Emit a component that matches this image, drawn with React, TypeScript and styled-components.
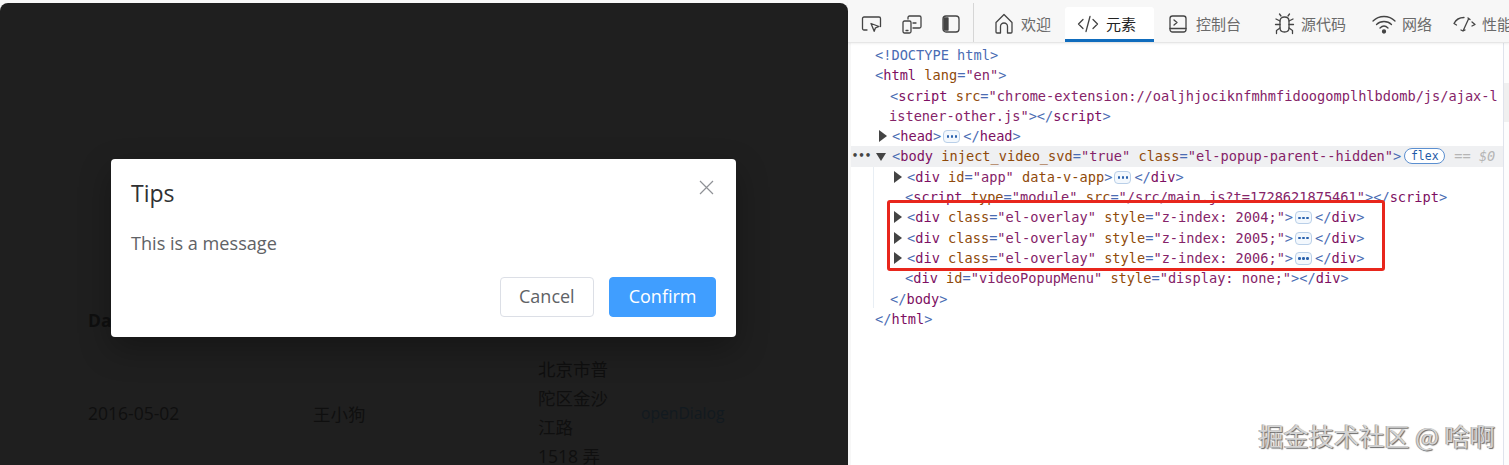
import React from 'react';
import styled, { createGlobalStyle } from 'styled-components';

const UI_FONT = `'Open Sans', 'Noto Sans CJK SC', sans-serif`;
const CODE_FONT = `'DejaVu Sans Mono', 'Liberation Mono', monospace`;

const GlobalStyle = createGlobalStyle`
  html, body {
    margin: 0;
    padding: 0;
    background: #f7f7f7;
    overflow: hidden;
  }
  * {
    box-sizing: border-box;
  }
`;

const Screen = styled.div`
  display: flex;
  width: 1509px;
  height: 465px;
  overflow: hidden;
  position: relative;
`;

/* left: the page under the dimmed overlay */
const PagePane = styled.section`
  position: relative;
  width: 848px;
  height: 462px;
  margin-top: 3px;
  padding: 292px 0 0 88px;
  background: #1f1f1f;
  border-radius: 8px 8px 0 0;
  overflow: hidden;
  font-family: ${UI_FONT};
  font-size: 17.5px;
  color: #0f0f0f;
`;

const TableRow = styled.div<{ $head?: boolean }>`
  display: grid;
  grid-template-columns: 225px 225px 103px 100px;
  align-items: center;
  height: ${(p) => (p.$head ? '50px' : 'auto')};
  padding-top: ${(p) => (p.$head ? '0' : '10px')};
  font-weight: ${(p) => (p.$head ? 700 : 400)};
`;

const Address = styled.div`
  width: 75px;
  line-height: 29px;
`;

const TableLink = styled.span`
  color: #121a20;
  font-size: 15.7px;
`;

const Dialog = styled.div`
  position: absolute;
  left: 111px;
  top: 156px;
  width: 625px;
  height: 178px;
  padding: 20px;
  background: #fff;
  border-radius: 4px;
  box-shadow: 0 12px 32px rgba(0, 0, 0, 0.3);
  display: flex;
  flex-direction: column;
`;

const DialogHead = styled.div`
  display: flex;
  justify-content: space-between;
  align-items: flex-start;
`;

const DialogTitle = styled.div`
  font-size: 23px;
  line-height: 30px;
  margin-top: -1px;
  color: #303133;
`;

const CloseIcon = styled.svg`
  width: 15px;
  height: 15px;
  margin: 1px 2px 0 0;
  stroke: #8f9196;
  stroke-width: 1.2;
  fill: none;
`;

const DialogBody = styled.div`
  margin-top: 21px;
  font-size: 18.1px;
  line-height: 28px;
  color: #606266;
`;

const DialogFoot = styled.div`
  display: flex;
  justify-content: flex-end;
  gap: 15px;
  margin-top: auto;
`;

const Button = styled.div<{ $primary?: boolean }>`
  height: 40px;
  padding: 0 18.5px 3px;
  display: flex;
  align-items: center;
  font-size: 18px;
  border-radius: 4px;
  border: 1px solid ${(p) => (p.$primary ? '#409eff' : '#dcdfe6')};
  background: ${(p) => (p.$primary ? '#409eff' : '#fff')};
  color: ${(p) => (p.$primary ? '#fff' : '#606266')};
`;

/* right: devtools */
const DevPane = styled.section`
  position: relative;
  flex: 1;
  min-width: 0;
  display: flex;
  flex-direction: column;
  background: #f7f7f7;
`;

const TabBar = styled.div`
  display: flex;
  align-items: stretch;
  height: 43px;
  padding-left: 13px;
  border-bottom: 1px solid #e6e6e6;
  box-shadow: 0 1px 2px rgba(0, 0, 0, 0.06);
  white-space: nowrap;
  overflow: hidden;
  z-index: 1;
`;

const ToolButtons = styled.div`
  display: flex;
  align-items: center;
  gap: 20px;
  padding: 2px 13px 0 0;
  height: 39px;
  margin-top: 3px;
  border-right: 1px solid #d6d6d6;
`;

const Tab = styled.div<{ $active?: boolean; $gap?: number; $pad: number; $width?: number }>`
  display: flex;
  align-items: center;
  gap: ${(p) => p.$gap ?? 7}px;
  height: 35px;
  margin-top: 7px;
  flex: 0 0 ${(p) => (p.$width ? `${p.$width}px` : 'auto')};
  padding-left: ${(p) => p.$pad}px;
  padding-top: 1px;
  font-family: 'Noto Sans CJK SC', sans-serif;
  font-size: 15px;
  color: ${(p) => (p.$active ? '#222' : '#6a6a6a')};
  background: ${(p) => (p.$active ? '#fff' : 'transparent')};
  border-bottom: 3px solid ${(p) => (p.$active ? '#0f6cbd' : 'transparent')};
  border-radius: 3px 3px 0 0;
`;

const Glyph = styled.svg<{ $w: number }>`
  width: ${(p) => p.$w}px;
  height: 22px;
  flex: none;
  fill: none;
  stroke: #444;
  stroke-width: 1.3;
  stroke-linecap: round;
  stroke-linejoin: round;
`;

const CodeArea = styled.div`
  flex: 1;
  display: flex;
  margin-left: 3px;
  background: #fff;
  overflow: hidden;
`;

const CodeLines = styled.div`
  position: relative;
  flex: 1;
  min-width: 0;
  padding-top: 2px;
  font-family: ${CODE_FONT};
  font-size: 13.65px;
`;

const ScrollTrack = styled.div`
  flex: 0 0 6px;
  padding-top: 40px;
  background: #fdfdfd;
  border-left: 1px solid #dfe3ec;
`;

const ScrollThumb = styled.div`
  height: 39px;
  background: #f0f0f0;
`;

const IndentGuide = styled.div`
  position: absolute;
  left: 22px;
  top: 124px;
  height: 141px;
  border-left: 1px solid #e8eef4;
`;

const Line = styled.div<{ $indent: number; $selected?: boolean }>`
  position: relative;
  height: 20.3px;
  line-height: 20.3px;
  padding-left: ${(p) => p.$indent}px;
  white-space: pre;
  background: ${(p) => (p.$selected ? '#eff0f2' : 'transparent')};
`;

const Bracket = styled.span`
  color: #4a6cb3;
`;
const TagName = styled.span`
  color: #7d0f62;
`;
const AttrName = styled.span`
  color: #8f4a0a;
`;
const AttrValue = styled.span`
  color: #852368;
`;

const Arrow = styled.span<{ $open?: boolean }>`
  position: absolute;
  width: 0;
  height: 0;
  ${(p) =>
    p.$open
      ? `margin-left: -16px;
         top: 7px;
         border-left: 5px solid transparent;
         border-right: 5px solid transparent;
         border-top: 8px solid #444;`
      : `margin-left: -13px;
         top: 4px;
         border-top: 6px solid transparent;
         border-bottom: 6px solid transparent;
         border-left: 8px solid #444;`}
`;

const RowDots = styled.span`
  position: absolute;
  left: 1px;
  font-weight: 700;
  font-size: 10px;
  letter-spacing: 0.5px;
  color: #444;
`;

const Fold = styled.span`
  display: inline-flex;
  align-items: center;
  justify-content: center;
  vertical-align: top;
  gap: 1.5px;
  width: 17px;
  height: 13px;
  margin: 4px 3px 0 2px;
  border: 1px solid #b9cfe8;
  border-radius: 4px;
  background: #f3f8fd;
  & > i {
    width: 2.5px;
    height: 2.5px;
    border-radius: 50%;
    background: #2a62ad;
  }
`;

const FlexPill = styled.span`
  display: inline-flex;
  align-items: center;
  justify-content: center;
  vertical-align: top;
  width: 41px;
  height: 16px;
  margin: 2px 0 0 3px;
  border: 1px solid #5b8fd0;
  border-radius: 8px;
  font-size: 11.5px;
  line-height: 14px;
  color: #1f5ba8;
  background: #fff;
`;

const Reference = styled.span`
  margin-left: 9px;
  color: #b5b5b5;
  font-style: italic;
`;

const RedBox = styled.div`
  position: absolute;
  left: 36px;
  top: 157px;
  width: 498px;
  height: 71px;
  border: 3px solid #e8261c;
  border-radius: 3px;
`;

const Watermark = styled.div`
  position: absolute;
  right: 14px;
  bottom: 14px;
  font-family: 'Noto Sans CJK SC', sans-serif;
  font-size: 25.2px;
  line-height: 32px;
  white-space: nowrap;
  color: #d4d4d4;
  text-shadow: 1px 1px 1px #666, -1px 0 0 #aaa;
`;

const Open = ({ name, children }: { name: string; children?: React.ReactNode }) => (
  <>
    <Bracket>&lt;</Bracket>
    <TagName>{name}</TagName>
    {children}
  </>
);

const Close = ({ name }: { name: string }) => (
  <>
    <Bracket>&lt;/</Bracket>
    <TagName>{name}</TagName>
    <Bracket>&gt;</Bracket>
  </>
);

const Attr = ({ name, value, wraps }: { name: string; value?: string; wraps?: boolean }) => (
  <>
    {' '}
    <AttrName>{name}</AttrName>
    {value !== undefined && (
      <>
        <Bracket>=</Bracket>
        <AttrValue>
          "{value}
          {!wraps && '"'}
        </AttrValue>
      </>
    )}
  </>
);

const Dots = () => (
  <Fold>
    <i />
    <i />
    <i />
  </Fold>
);

const overlays = ['2004', '2005', '2006'];

const App: React.FC = () => {
  return (
    <Screen>
      <GlobalStyle />
      <PagePane>
        <TableRow $head>
          <span>Date</span>
        </TableRow>
        <TableRow>
          <span>2016-05-02</span>
          <span>王小狗</span>
          <Address>北京市普陀区金沙江路 1518 弄</Address>
          <TableLink>openDialog</TableLink>
        </TableRow>
        <Dialog>
          <DialogHead>
            <DialogTitle>Tips</DialogTitle>
            <CloseIcon viewBox="0 0 15 15">
              <path d="M1 1l13 13M14 1L1 14" />
            </CloseIcon>
          </DialogHead>
          <DialogBody>This is a message</DialogBody>
          <DialogFoot>
            <Button>Cancel</Button>
            <Button $primary>Confirm</Button>
          </DialogFoot>
        </Dialog>
      </PagePane>

      <DevPane>
        <TabBar>
          <ToolButtons>
            <Glyph $w={21} viewBox="0 0 21 22">
              <path d="M6 17H3a1.500 1.500 0 0 1-1.500-1.500V5.500A1.500 1.500 0 0 1 3 4h15a1.500 1.500 0 0 1 1.500 1.500v8" />
              <path d="M10 10.500l8 3-3.500 1.300-1.300 3.500z" />
            </Glyph>
            <Glyph $w={20} viewBox="0 0 20 22">
              <path d="M6 6V4.500A1.500 1.500 0 0 1 7.500 3h10A1.500 1.500 0 0 1 19 4.500v9a1.500 1.500 0 0 1-1.500 1.500H11" />
              <rect x="1" y="8" width="8" height="12" rx="1.500" />
              <path d="M11 10h3M4 17.500h2" />
            </Glyph>
            <Glyph $w={18} viewBox="0 0 18 22">
              <rect x="1" y="3" width="16" height="16" rx="3" />
              <path d="M2 5h4v12H2z" fill="#444" />
            </Glyph>
          </ToolButtons>
          <Tab $pad={20} $width={91}>
            <Glyph $w={20} viewBox="0 0 20 22">
              <path d="M2 19V9.500L10 1.500l8 8V19a1 1 0 0 1-1 1h-3.500v-6.500a3.500 3.500 0 0 0-7 0V20H3a1 1 0 0 1-1-1z" />
            </Glyph>
            欢迎
          </Tab>
          <Tab $active $pad={12} $width={89}>
            <Glyph $w={22} viewBox="0 0 22 22">
              <path d="M6 6.500L1.500 11 6 15.500M16 6.500l4.500 4.500-4.500 4.500M13 3.500L9 18.500" />
            </Glyph>
            元素
          </Tab>
          <Tab $pad={15} $gap={9} $width={120}>
            <Glyph $w={18} viewBox="0 0 18 22">
              <rect x="1" y="3" width="16" height="16" rx="2.500" />
              <path d="M1 15.500h16M5 7l3 2.500L5 12" />
            </Glyph>
            控制台
          </Tab>
          <Tab $pad={0} $gap={6} $width={98}>
            <Glyph $w={21} viewBox="0 0 21 22">
              <path d="M6 8c0-2.500 2-4 4.500-4S15 5.500 15 8v7c0 2.500-2 4-4.500 4S6 17.500 6 15z" />
              <path d="M7 3L5.500 1M14 3l1.500-2M6 8L2 6M15 8l4-2M6 11.500H1.500M15 11.500h4.500M6 15l-3.500 2.500v3M15 15l3.500 2.500v3" />
            </Glyph>
            源代码
          </Tab>
          <Tab $pad={0} $gap={6} $width={80}>
            <Glyph $w={24} viewBox="0 0 24 22">
              <path d="M1 8c6-6 16-6 22 0M4.500 11.500c4-4 11-4 15 0M8 15c2.500-2.500 5.500-2.500 8 0" />
              <circle cx="12" cy="18.500" r="1.500" fill="#444" />
            </Glyph>
            网络
          </Tab>
          <Tab $pad={0} $gap={6}>
            <Glyph $w={24} viewBox="0 0 24 22">
              <path d="M2 10.500C4 6.500 8 4.500 12 4.500M2 10.500l2.500 1.500M16.500 6l-5.500 12M16 5l2 1.500M20 9l3 2.500L20 13M9 17l2 1 2-1" />
            </Glyph>
            性能
          </Tab>
        </TabBar>

        <CodeArea>
          <CodeLines>
            <IndentGuide />
            <Line $indent={24}>
              <Bracket>&lt;!DOCTYPE html&gt;</Bracket>
            </Line>
            <Line $indent={24}>
              <Open name="html">
                <Attr name="lang" value="en" />
              </Open>
              <Bracket>&gt;</Bracket>
            </Line>
            <Line $indent={39}>
              <Open name="script">
                <Attr name="src" wraps value="chrome-extension://oaljhjociknfmhmfidoogomplhlbdomb/js/ajax-l" />
              </Open>
            </Line>
            <Line $indent={38}>
              <AttrValue>istener-other.js"</AttrValue>
              <Bracket>&gt;</Bracket>
              <Close name="script" />
            </Line>
            <Line $indent={41}>
              <Arrow />
              <Open name="head" />
              <Bracket>&gt;</Bracket>
              <Dots />
              <Close name="head" />
            </Line>
            <Line $indent={41} $selected>
              <RowDots>•••</RowDots>
              <Arrow $open />
              <Open name="body">
                <Attr name="inject_video_svd" value="true" />
                <Attr name="class" value="el-popup-parent--hidden" />
              </Open>
              <Bracket>&gt;</Bracket>
              <FlexPill>flex</FlexPill>
              <Reference>== $0</Reference>
            </Line>
            <Line $indent={56}>
              <Arrow />
              <Open name="div">
                <Attr name="id" value="app" />
                <Attr name="data-v-app" />
              </Open>
              <Bracket>&gt;</Bracket>
              <Dots />
              <Close name="div" />
            </Line>
            <Line $indent={54}>
              <Open name="script">
                <Attr name="type" value="module" />
                <Attr name="src" value="/src/main.js?t=1728621875461" />
              </Open>
              <Bracket>&gt;</Bracket>
              <Close name="script" />
            </Line>
            {overlays.map((z) => (
              <Line $indent={56} key={z}>
                <Arrow />
                <Open name="div">
                  <Attr name="class" value="el-overlay" />
                  <Attr name="style" value={`z-index: ${z};`} />
                </Open>
                <Bracket>&gt;</Bracket>
                <Dots />
                <Close name="div" />
              </Line>
            ))}
            <Line $indent={54}>
              <Open name="div">
                <Attr name="id" value="videoPopupMenu" />
                <Attr name="style" value="display: none;" />
              </Open>
              <Bracket>&gt;</Bracket>
              <Close name="div" />
            </Line>
            <Line $indent={39}>
              <Close name="body" />
            </Line>
            <Line $indent={24}>
              <Close name="html" />
            </Line>
            <RedBox />
          </CodeLines>
          <ScrollTrack>
            <ScrollThumb />
          </ScrollTrack>
        </CodeArea>
        <Watermark>掘金技术社区 @ 啥啊</Watermark>
      </DevPane>
    </Screen>
  );
};

export default App;
